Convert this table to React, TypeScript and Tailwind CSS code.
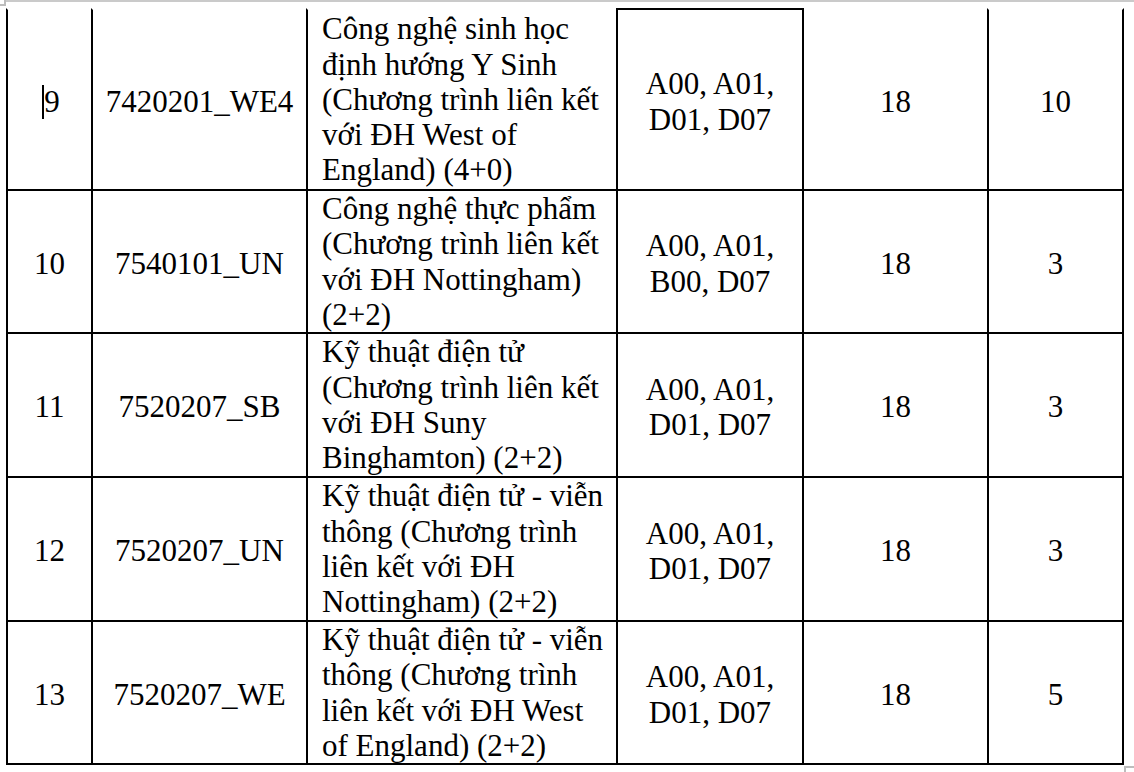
import React from "react";

type Row = {
  no: string;
  code: string;
  name: string[];
  combo: string[];
  score: string;
  quota: string;
  h: string;
  first?: boolean;
};

const rows: Row[] = [
  {
    no: "9",
    code: "7420201_WE4",
    name: ["Công nghệ sinh học", "định hướng Y Sinh", "(Chương trình liên kết", "với ĐH West of", "England) (4+0)"],
    combo: ["A00, A01,", "D01, D07"],
    score: "18",
    quota: "10",
    h: "h-[183px]",
    first: true,
  },
  {
    no: "10",
    code: "7540101_UN",
    name: ["Công nghệ thực phẩm", "(Chương trình liên kết", "với ĐH Nottingham)", "(2+2)"],
    combo: ["A00, A01,", "B00, D07"],
    score: "18",
    quota: "3",
    h: "h-[143px]",
  },
  {
    no: "11",
    code: "7520207_SB",
    name: ["Kỹ thuật điện tử", "(Chương trình liên kết", "với ĐH Suny", "Binghamton) (2+2)"],
    combo: ["A00, A01,", "D01, D07"],
    score: "18",
    quota: "3",
    h: "h-[144px]",
  },
  {
    no: "12",
    code: "7520207_UN",
    name: ["Kỹ thuật điện tử - viễn", "thông (Chương trình", "liên kết với ĐH", "Nottingham) (2+2)"],
    combo: ["A00, A01,", "D01, D07"],
    score: "18",
    quota: "3",
    h: "h-[144px]",
  },
  {
    no: "13",
    code: "7520207_WE",
    name: ["Kỹ thuật điện tử - viễn", "thông (Chương trình", "liên kết với ĐH West", "of England) (2+2)"],
    combo: ["A00, A01,", "D01, D07"],
    score: "18",
    quota: "5",
    h: "h-[143px]",
  },
];

function Lines({ lines }: { lines: string[] }) {
  return (
    <div className="whitespace-nowrap">
      {lines.map((l, i) => (
        <div key={i}>{l}</div>
      ))}
    </div>
  );
}

export default function App() {
  return (
    <div className="relative w-[1134px] h-[772px] overflow-hidden bg-white text-black font-['Liberation_Serif',serif] text-[31px] leading-[35.3px]">
      {/* page top edge */}
      <div className="flex h-[2px]">
        <div className="w-[5px] bg-[#bdbdbd]" />
        <div className="flex-1 bg-[#cacaca]" />
      </div>
      <div className="absolute left-0 top-0 w-[6px] h-[6px] border-r-2 border-b-2 border-[#bdbdbd] bg-white" />

      <div className="ml-[6px] mt-[6px] w-[1118px] flex flex-col">
        {rows.map((r, idx) => {
          const top = r.first ? "border-t-2 border-t-transparent" : "";
          const cell = `border-l-2 border-b-2 border-l-black border-b-black ${top} flex items-center`;
          return (
            <div key={idx} className={`grid grid-cols-[85px_215px_310px_186px_185px_137px] grid-rows-[100%] overflow-hidden ${r.h}`}>
              <div className={`${cell} justify-center pt-[4px]`}>
                {r.first ? (
                  <span className="relative ml-[5px]">
                    <span className="absolute left-[-2px] top-[1px] bottom-[0px] w-[2px] bg-black" />
                    {r.no}
                  </span>
                ) : (
                  <span>{r.no}</span>
                )}
              </div>
              <div className={`${cell} justify-center pt-[4px]`}>
                <span>{r.code}</span>
              </div>
              <div className={`${cell} justify-start pl-[14px]`}>
                <Lines lines={r.name} />
              </div>
              <div
                className={`border-l-2 border-b-2 border-l-black border-b-black ${
                  r.first ? "border-t-2 border-t-black border-r-2 border-r-black" : ""
                } flex items-center justify-center pt-[4px] ${r.first ? "-mr-[2px] relative z-10" : ""}`}
              >
                <div className="text-center whitespace-nowrap">
                  {r.combo.map((c, i) => (
                    <div key={i}>{c}</div>
                  ))}
                </div>
              </div>
              <div className={`${cell} justify-center pt-[4px]`}>
                <span>{r.score}</span>
              </div>
              <div className={`${cell} border-r-2 border-r-black justify-center pt-[4px]`}>
                <span>{r.quota}</span>
              </div>
            </div>
          );
        })}
      </div>

      {/* page corner mark bottom-right */}
      <div className="absolute left-[1124px] top-[766px] w-[10px] h-[6px] border-t-2 border-l-2 border-[#bdbdbd]" />
    </div>
  );
}
